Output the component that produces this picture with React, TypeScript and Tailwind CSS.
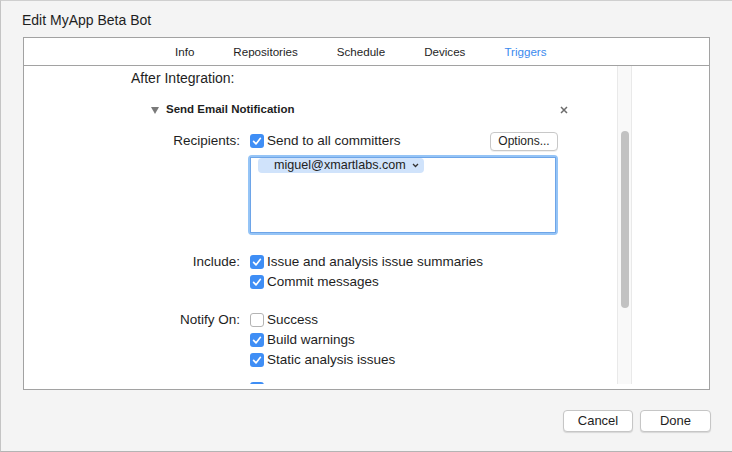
import type { ReactNode } from "react";

function Checkbox({ checked }: { checked: boolean }) {
  if (!checked) {
    return <span className="w-[14px] h-[14px] shrink-0 rounded-[3px] border border-[#b4b4b4] bg-white" />;
  }
  return (
    <span className="w-[14px] h-[14px] shrink-0 rounded-[3px] bg-[#3f8ef5] flex items-center justify-center">
      <svg width="14" height="14" viewBox="0 0 14 14">
        <path d="M3.6 7.4 L6 9.9 L10.4 4.3" fill="none" stroke="white" strokeWidth="1.6" strokeLinecap="round" strokeLinejoin="round" />
      </svg>
    </span>
  );
}

function CheckRow({ checked, children }: { checked: boolean; children?: ReactNode }) {
  return (
    <div className="h-[20px] flex items-center gap-[3px]">
      <Checkbox checked={checked} />
      {children && <span className="whitespace-nowrap">{children}</span>}
    </div>
  );
}

function Label({ children }: { children: ReactNode }) {
  return <div className="w-[216px] h-[20px] flex items-center justify-end whitespace-nowrap">{children}</div>;
}

const tabs = ["Info", "Repositories", "Schedule", "Devices", "Triggers"];

export default function App() {
  return (
    <div className="w-[732px] h-[452px] bg-[#f4f4f4] border-l border-t border-b border-l-[#c4c4c4] border-t-[#cfcfcf] border-b-[#b4b4b4] flex flex-col font-['Liberation_Sans',Arial,sans-serif] text-[#1e1e1e] overflow-hidden">
      {/* title */}
      <div className="h-[36px] pl-[21px] pt-[11px] text-[14px] leading-[17px]">Edit MyApp Beta Bot</div>

      {/* main box */}
      <div className="ml-[22px] w-[687px] h-[353px] border border-[#a2a2a2] bg-white flex flex-col">
        <div className="h-[28px] border-b border-[#a2a2a2] flex items-center pl-[151px] gap-[39px] text-[11.6px]">
          {tabs.map((t) => (
            <span key={t} className={t === "Triggers" ? "text-[#3b8aee]" : "text-[#1e1e1e]"}>
              {t}
            </span>
          ))}
        </div>

        <div className="flex-1 min-h-0 flex pb-[5px]">
          {/* scroll content */}
          <div className="w-[593px] overflow-hidden text-[13.5px] pt-[2px]">
            <div className="h-[20px] flex items-center pl-[107px] text-[14px]">After Integration:</div>

            <div className="mt-[12px] h-[20px] flex items-center justify-between pl-[127px] pr-[49px]">
              <div className="flex items-center gap-[7px]">
                <svg width="8" height="8" viewBox="0 0 8 8">
                  <polygon points="0,1 8,1 4,8" fill="#7a7a7a" />
                </svg>
                <span className="text-[11.5px] font-bold">Send Email Notification</span>
              </div>
              <svg width="8" height="8" viewBox="0 0 8 8">
                <path d="M1 1 L7 7 M7 1 L1 7" stroke="#6c6c6c" strokeWidth="1.5" />
              </svg>
            </div>

            <div className="mt-[11px] flex gap-[10px]">
              <Label>Recipients:</Label>
              <div className="w-[308px] flex items-center justify-between">
                <CheckRow checked>Send to all committers</CheckRow>
                <button className="w-[68px] h-[19px] rounded-[4px] border border-[#c8c8c8] bg-white text-[12px] leading-none shadow-[0_1px_0_rgba(0,0,0,0.06)]">
                  Options...
                </button>
              </div>
            </div>

            <div className="mt-[4px] ml-[224px] w-[310px] h-[80px] rounded-[4px] bg-[#95c4f6] p-[2px]">
              <div className="w-full h-full bg-white border border-[#6ea5e8] pt-[0px] pl-[7px] flex items-start">
                <span className="flex items-center h-[15px] rounded-[4px] bg-[#d0e3fb] pl-[16px] pr-[5px] gap-[6px] text-[12.6px] leading-none text-[#222]">
                  miguel@xmartlabs.com
                  <svg width="7" height="5" viewBox="0 0 7 5">
                    <path d="M1 1 L3.5 3.5 L6 1" fill="none" stroke="#333" strokeWidth="1.3" />
                  </svg>
                </span>
              </div>
            </div>

            <div className="mt-[17px] flex gap-[10px]">
              <Label>Include:</Label>
              <div>
                <CheckRow checked>Issue and analysis issue summaries</CheckRow>
                <CheckRow checked>Commit messages</CheckRow>
              </div>
            </div>

            <div className="mt-[18px] flex gap-[10px]">
              <Label>Notify On:</Label>
              <div>
                <CheckRow checked={false}>Success</CheckRow>
                <CheckRow checked>Build warnings</CheckRow>
                <CheckRow checked>Static analysis issues</CheckRow>
                <div className="mt-[9px]">
                  <CheckRow checked />
                </div>
              </div>
            </div>
          </div>

          {/* scrollbar */}
          <div className="w-[15px] border-x border-[#e9e9e9] bg-[#f9f9f9] flex justify-center">
            <div className="w-[8px] mt-[65px] h-[177px] rounded-full bg-[#c2c2c2]" />
          </div>
          <div className="flex-1" />
        </div>
      </div>

      {/* footer */}
      <div className="mt-[20px] flex justify-end gap-[7px] pr-[21px] text-[13px]">
        <button className="w-[70px] h-[22px] rounded-[4px] border border-[#c6c6c6] bg-white shadow-[0_1px_1px_rgba(0,0,0,0.12)]">Cancel</button>
        <button className="w-[71px] h-[22px] rounded-[4px] border border-[#c6c6c6] bg-white shadow-[0_1px_1px_rgba(0,0,0,0.12)]">Done</button>
      </div>
    </div>
  );
}
